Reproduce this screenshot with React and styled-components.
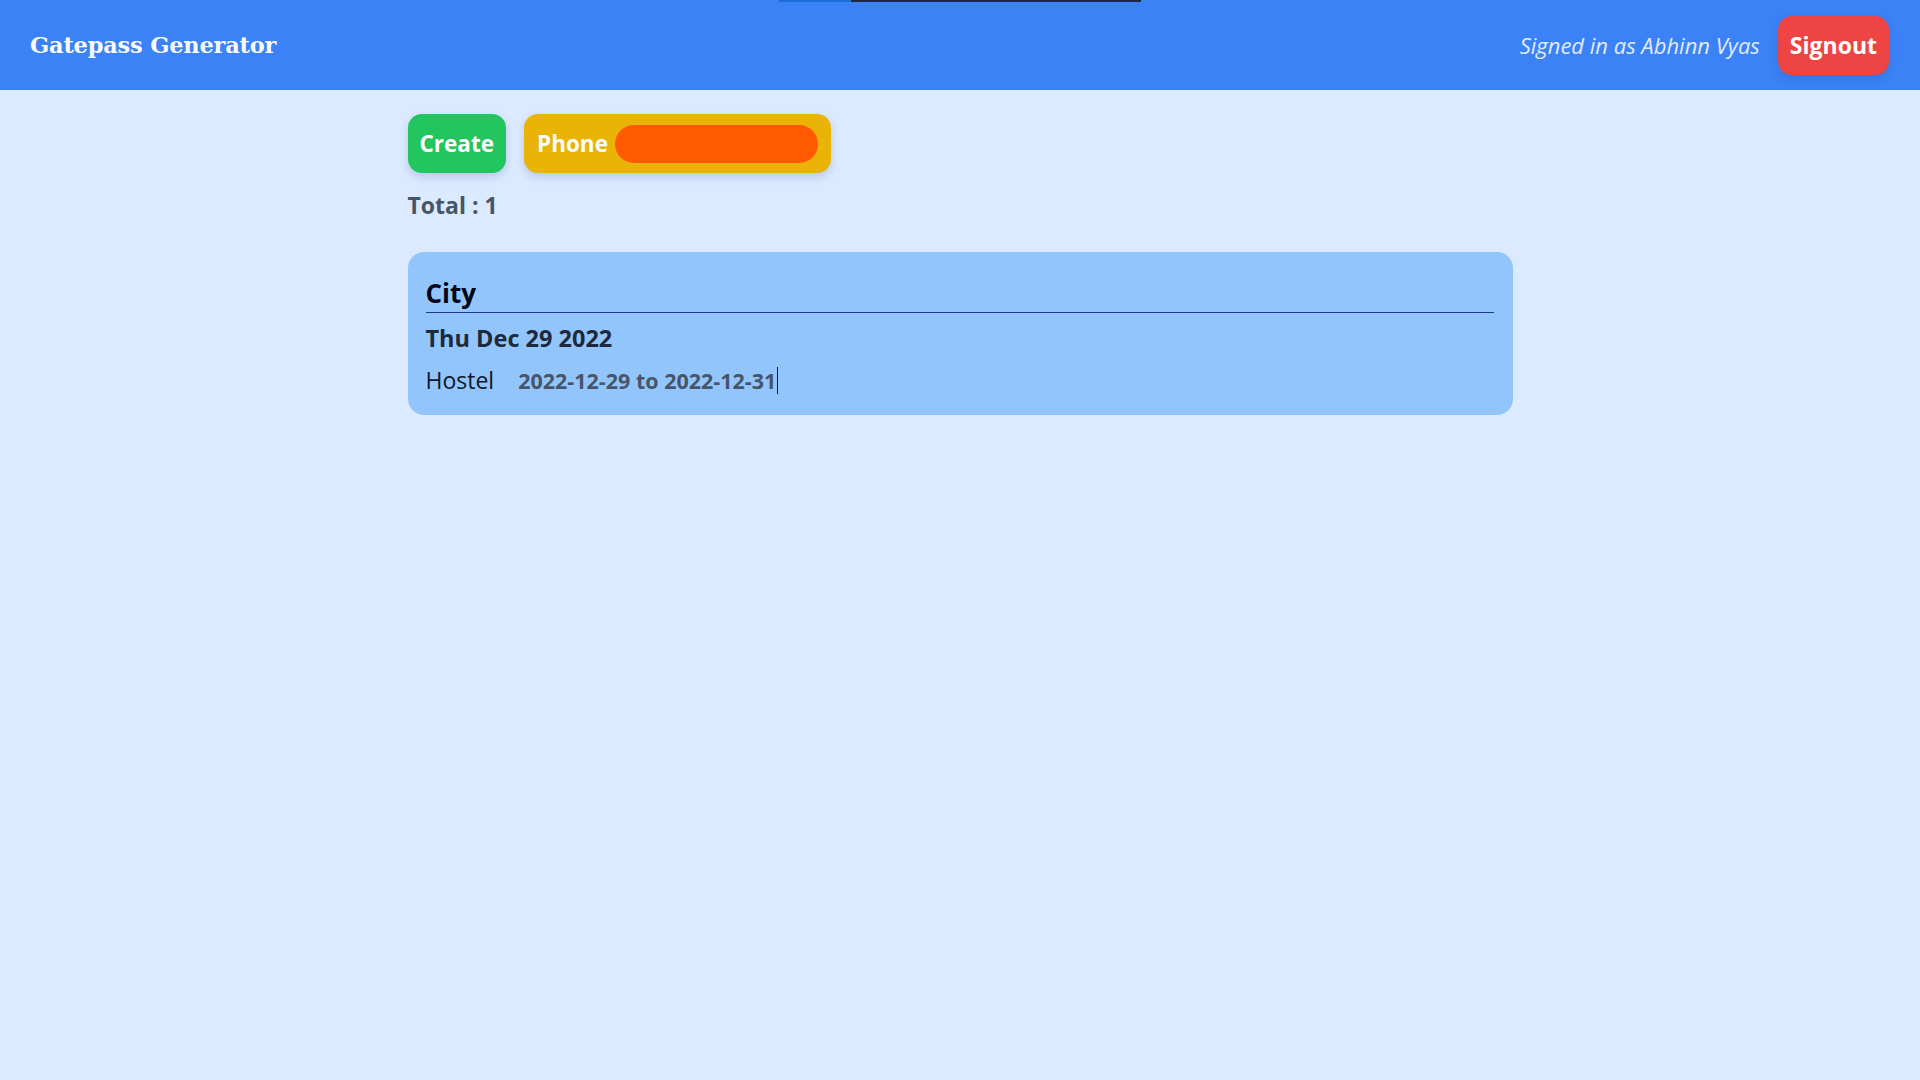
import React from 'react'
import styled, { createGlobalStyle } from 'styled-components'

const GlobalStyle = createGlobalStyle`
  html, body {
    margin: 0;
    padding: 0;
    background: #dbeafe;
    font-family: "Open Sans", "Noto Sans", sans-serif;
  }
  #root {
    min-height: 100vh;
  }
`

const Header = styled.header`
  position: relative;
  height: 90px;
  background: #3b82f6;
  display: flex;
  align-items: center;
  justify-content: space-between;
  padding: 0 31px 0 30px;
  box-sizing: border-box;
`

const TopBar = styled.div`
  position: absolute;
  top: 0;
  left: 779px;
  width: 362px;
  height: 2px;
  display: flex;
  span:first-child {
    width: 72px;
    background: #1d6fd8;
  }
  span:last-child {
    flex: 1;
    background: #1e293b;
  }
`

const Logo = styled.h1`
  margin: 0;
  font-family: "DejaVu Serif", "Liberation Serif", serif;
  font-weight: bold;
  font-size: 22.5px;
  color: #f8fafc;
  letter-spacing: -0.2px;
`

const UserBox = styled.div`
  display: flex;
  align-items: center;
  gap: 18px;
`

const SignedIn = styled.span`
  font-style: italic;
  font-size: 22px;
  color: #e0eaff;
`

const Button = styled.button`
  border: none;
  height: 59px;
  padding: 0 ${p => p.$pad || 12}px;
  border-radius: 14px;
  background: ${p => p.$bg};
  color: #fff;
  font-family: inherit;
  font-weight: 700;
  font-size: ${p => p.$size || 22.5}px;
  display: flex;
  align-items: center;
  gap: 7px;
  box-shadow: 0 4px 8px rgba(30, 58, 138, 0.18);
  cursor: pointer;
`

const Redacted = styled.span`
  display: inline-block;
  width: 203px;
  height: 38px;
  border-radius: 19px;
  background: #ff5a00;
`

const Main = styled.main`
  width: 1105px;
  margin: 24px auto 0;
`

const Actions = styled.div`
  display: flex;
  gap: 18px;
`

const Total = styled.p`
  margin: 16px 0 0;
  font-weight: 700;
  font-size: 23px;
  line-height: 32px;
  color: #475569;
`

const Card = styled.section`
  margin-top: 31px;
  background: #93c5fd;
  border-radius: 16px;
  padding: 23px 19px 19px 18px;
`

const Place = styled.h2`
  margin: 0;
  padding-bottom: 1px;
  font-size: 26px;
  line-height: 36px;
  font-weight: 700;
  color: #020617;
  border-bottom: 1px solid #1e3a8a;
`

const DateLine = styled.h3`
  margin: 9px 0 0;
  font-size: 23.5px;
  line-height: 32px;
  font-weight: 700;
  color: #1e293b;
`

const Row = styled.div`
  display: flex;
  align-items: baseline;
  gap: 24px;
  margin-top: 10px;
  line-height: 32px;
`

const Kind = styled.span`
  font-size: 23px;
  color: #0f172a;
`

const Range = styled.span`
  font-size: 21.5px;
  font-weight: 700;
  color: #475569;
  border-right: 1px solid #0f172a;
  padding-right: 1px;
  line-height: 27px;
`

export default function App() {
  return (
    <>
      <GlobalStyle />
      <Header>
        <TopBar>
          <span />
          <span />
        </TopBar>
        <Logo>Gatepass Generator</Logo>
        <UserBox>
          <SignedIn>Signed in as Abhinn Vyas</SignedIn>
          <Button $bg="#ef4444" $size={23}>Signout</Button>
        </UserBox>
      </Header>
      <Main>
        <Actions>
          <Button $bg="#22c55e">Create</Button>
          <Button $bg="#eab308" $pad={13}>
            Phone
            <Redacted />
          </Button>
        </Actions>
        <Total>Total : 1</Total>
        <Card>
          <Place>City</Place>
          <DateLine>Thu Dec 29 2022</DateLine>
          <Row>
            <Kind>Hostel</Kind>
            <Range>2022-12-29 to 2022-12-31</Range>
          </Row>
        </Card>
      </Main>
    </>
  )
}
